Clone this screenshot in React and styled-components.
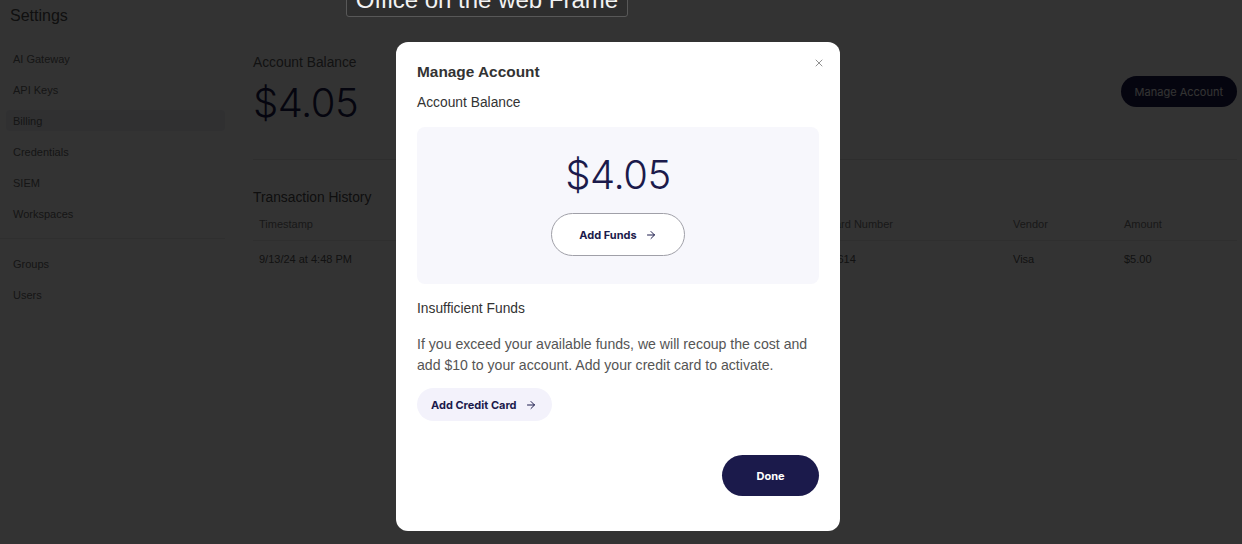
import { createGlobalStyle, styled } from 'styled-components';
import { ArrowRight, X } from 'lucide-react';

const GlobalStyle = createGlobalStyle`
	html, body {
		margin: 0;
		padding: 0;
		background: #ffffff;
		font-family: 'Liberation Sans', Arial, sans-serif;
		overflow: hidden;
	}
	* {
		box-sizing: border-box;
	}
`;

const navTop = ['AI Gateway', 'API Keys', 'Billing', 'Credentials', 'SIEM', 'Workspaces'];
const navBottom = ['Groups', 'Users'];

const App = () => {
	return (
		<>
			<GlobalStyle />
			<Page>
				<Sidebar>
					<Title>Settings</Title>
					<NavList>
						{navTop.map(item => (
							<NavItem key={item} $active={item === 'Billing'}>
								{item}
							</NavItem>
						))}
					</NavList>
					<NavDivider />
					<NavList>
						{navBottom.map(item => (
							<NavItem key={item}>{item}</NavItem>
						))}
					</NavList>
				</Sidebar>
				<Main>
					<BalanceRow>
						<div>
							<Label>Account Balance</Label>
							<BigAmount>$4.05</BigAmount>
						</div>
						<DarkPill>Manage Account</DarkPill>
					</BalanceRow>
					<SectionTitle>Transaction History</SectionTitle>
					<Table>
						<HeadCell>Timestamp</HeadCell>
						<HeadCell>Card Number</HeadCell>
						<HeadCell>Vendor</HeadCell>
						<HeadCell>Amount</HeadCell>
						<Cell>9/13/24 at 4:48 PM</Cell>
						<Cell>*4614</Cell>
						<Cell>Visa</Cell>
						<Cell>$5.00</Cell>
					</Table>
				</Main>
			</Page>

			<Overlay>
				<Modal>
					<ModalHeader>
						<ModalTitle>Manage Account</ModalTitle>
						<CloseButton aria-label='Close'>
							<X size={12} strokeWidth={1.5} />
						</CloseButton>
					</ModalHeader>
					<SubTitle>Account Balance</SubTitle>
					<BalanceCard>
						<CardAmount>$4.05</CardAmount>
						<OutlinePill>
							Add Funds <ArrowRight size={12} strokeWidth={2} />
						</OutlinePill>
					</BalanceCard>
					<SubTitle $top={17}>Insufficient Funds</SubTitle>
					<Paragraph>
						If you exceed your available funds, we will recoup the cost and add $10 to your
						account. Add your credit card to activate.
					</Paragraph>
					<SoftPill>
						Add Credit Card <ArrowRight size={12} strokeWidth={2} />
					</SoftPill>
					<Footer>
						<DonePill>Done</DonePill>
					</Footer>
				</Modal>
			</Overlay>

			<Tooltip>Office on the web Frame</Tooltip>
		</>
	);
};

const Page = styled.div`
	display: flex;
	width: 1242px;
	height: 544px;
	background: #ffffff;
`;

const Sidebar = styled.aside`
	width: 232px;
	flex-shrink: 0;
	padding-top: 6px;
`;

const Title = styled.h1`
	margin: 0 0 22px 10px;
	font-size: 16px;
	line-height: 20px;
	font-weight: 400;
	color: #505050;
`;

const NavList = styled.nav`
	display: flex;
	flex-direction: column;
	gap: 10px;
`;

const NavItem = styled.div`
	height: 21px;
	margin: 0 7px 0 6px;
	padding: 0 7px;
	border-radius: 4px;
	display: flex;
	align-items: center;
	font-size: 11px;
	color: #6a6a6a;
	background: ${props => (props.$active ? '#eef0f6' : 'transparent')};
`;

const NavDivider = styled.hr`
	margin: 14px 7px 14px 0;
	border: none;
	border-top: 1px solid #ececec;
`;

const Main = styled.main`
	flex: 1;
	padding: 54px 5px 0 21px;
`;

const BalanceRow = styled.div`
	display: flex;
	align-items: center;
	justify-content: space-between;
	padding-bottom: 30px;
	border-bottom: 1px solid #e6e6e6;
`;

const Label = styled.div`
	font-size: 13.8px;
	line-height: 17px;
	color: #5a5a5a;
`;

const BigAmount = styled.div`
	margin-top: 6px;
	font-family: Inter, 'Liberation Sans', sans-serif;
	font-size: 40px;
	line-height: 52px;
	font-weight: 300;
	letter-spacing: -0.5px;
	color: #1b1a4b;
`;

const DarkPill = styled.button`
	height: 31px;
	padding: 0 14px;
	border: none;
	border-radius: 999px;
	background: #1b1a4b;
	color: #ffffff;
	font-family: Inter, 'Liberation Sans', sans-serif;
	font-size: 11px;
`;

const SectionTitle = styled.h2`
	margin: 29px 0 0;
	font-size: 13.8px;
	line-height: 17px;
	font-weight: 400;
	color: #4a4a4a;
`;

const Table = styled.div`
	display: grid;
	grid-template-columns: 568px 186px 111px 1fr;
	margin-top: 1px;
`;

const HeadCell = styled.div`
	padding: 0 6px;
	height: 34px;
	display: flex;
	align-items: center;
	font-size: 11px;
	color: #7a7a7a;
	border-bottom: 1px solid #ececec;
`;

const Cell = styled.div`
	padding: 0 6px;
	height: 36px;
	display: flex;
	align-items: center;
	font-size: 11px;
	color: #5a5a5a;
`;

const Overlay = styled.div`
	position: fixed;
	inset: 0;
	display: flex;
	justify-content: center;
	align-items: flex-start;
	padding: 42px 6px 0 0;
	background: rgba(0, 0, 0, 0.8);
`;

const Modal = styled.div`
	width: 444px;
	height: 489px;
	padding: 21px 21px 35px;
	background: #ffffff;
	border-radius: 12px;
	display: flex;
	flex-direction: column;
`;

const ModalHeader = styled.div`
	display: flex;
	justify-content: space-between;
	align-items: flex-start;
`;

const ModalTitle = styled.h3`
	margin: 0;
	font-size: 15.4px;
	line-height: 17px;
	font-weight: 700;
	color: #333333;
`;

const CloseButton = styled.button`
	margin: -6px -6px 0 0;
	padding: 0;
	border: none;
	background: none;
	color: #6e6e6e;
	display: flex;
`;

const SubTitle = styled.div`
	margin-top: ${props => props.$top ?? 15}px;
	font-size: 13.8px;
	line-height: 16px;
	color: #333333;
`;

const BalanceCard = styled.div`
	margin-top: 16px;
	height: 157px;
	padding-top: 24px;
	border-radius: 8px;
	background: #f7f7fc;
	display: flex;
	flex-direction: column;
	align-items: center;
`;

const CardAmount = styled.div`
	font-family: Inter, 'Liberation Sans', sans-serif;
	font-size: 40px;
	line-height: 48px;
	font-weight: 300;
	letter-spacing: -0.5px;
	color: #1b1a4b;
`;

const PillBase = styled.button`
	display: inline-flex;
	align-items: center;
	gap: 8px;
	border-radius: 999px;
	font-family: Inter, 'Liberation Sans', sans-serif;
	font-size: 11px;
	font-weight: 700;
	color: #1b1a4b;
	cursor: pointer;
`;

const OutlinePill = styled(PillBase)`
	margin-top: 14px;
	width: 134px;
	height: 43px;
	justify-content: center;
	border: 1px solid #a0a0a8;
	background: #ffffff;
`;

const Paragraph = styled.p`
	margin: 17px 0 0;
	font-size: 14.1px;
	line-height: 21px;
	color: #555555;
`;

const SoftPill = styled(PillBase)`
	margin-top: 12px;
	align-self: flex-start;
	height: 33px;
	padding: 0 15px 0 14px;
	border: none;
	background: #f3f2fb;
`;

const Footer = styled.div`
	margin-top: auto;
	display: flex;
	justify-content: flex-end;
`;

const DonePill = styled(PillBase)`
	width: 97px;
	height: 41px;
	justify-content: center;
	border: none;
	background: #1b1a4b;
	color: #ffffff;
`;

const Tooltip = styled.div`
	position: fixed;
	left: 346px;
	top: -22px;
	height: 39px;
	width: 282px;
	padding: 9px 0 0;
	text-align: center;
	background: #2e2e2e;
	border: 1px solid #585858;
	border-radius: 0 0 3px 3px;
	font-size: 24px;
	line-height: 24px;
	color: #f2f2f2;
`;

export default App;
